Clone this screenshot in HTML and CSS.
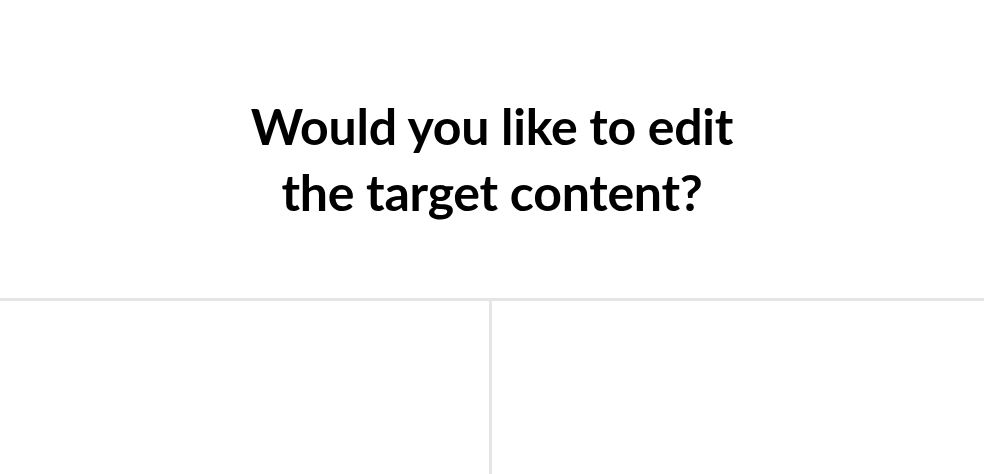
FILE: index.html
```html
<!DOCTYPE html>
<html lang="en">
<head>
    <meta charset="UTF-8">
    <meta name="viewport" content="width=device-width, initial-scale=1.0">
    <title>Edit target content</title>
    <link rel="stylesheet" href="styles.css">
</head>
<body>
    <div class="prompt">
        <h1 class="prompt-title">Would you like to edit<br>the target content?</h1>
    </div>

    <div class="choices">
        <div class="choice left"></div>
        <div class="choice right"></div>
    </div>
</body>
</html>
```

FILE: styles.css
```css
:root {
    --line-color: #e5e5e5;
}

body {
    font-family: 'Lato', sans-serif;
    background-color: #ffffff;
    color: #000000;
    margin: 0;
    padding: 0;
    height: 100vh;
    display: flex;
    flex-direction: column;
    overflow: hidden;
}

.prompt {
    height: 298px;
    flex-shrink: 0;
    display: flex;
    align-items: center;
    justify-content: center;
    padding-top: 20px;
    box-sizing: border-box;
}

.prompt-title {
    margin: 0;
    text-align: center;
    font-size: 50px;
    line-height: 66px;
    font-weight: 700;
    letter-spacing: -0.25px;
}

.choices {
    flex: 1;
    display: grid;
    grid-template-columns: 1fr 1fr;
    border-top: 3px solid var(--line-color);
}

.choice {
    box-sizing: border-box;
}

.choice.left {
    border-right: 3px solid var(--line-color);
}
```
